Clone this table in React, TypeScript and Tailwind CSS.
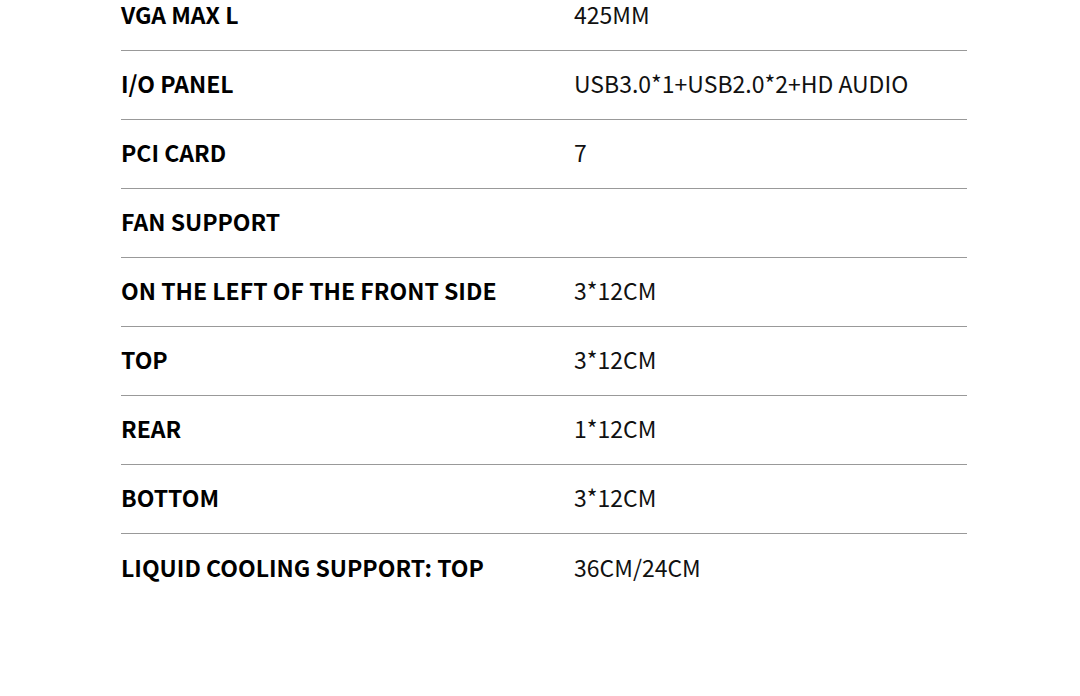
import React from 'react';

interface SpecRow {
  label: string;
  value: string;
}

const specs: SpecRow[] = [
  { label: "VGA MAX L", value: "425MM" },
  { label: "I/O PANEL", value: "USB3.0*1+USB2.0*2+HD AUDIO" },
  { label: "PCI CARD", value: "7" },
  { label: "FAN SUPPORT", value: "" },
  { label: "ON THE LEFT OF THE FRONT SIDE", value: "3*12CM" },
  { label: "TOP", value: "3*12CM" },
  { label: "REAR", value: "1*12CM" },
  { label: "BOTTOM", value: "3*12CM" },
  { label: "LIQUID COOLING SUPPORT: TOP", value: "36CM/24CM" },
];

const App = () => {
  return (
    <div
      className="min-h-screen bg-white overflow-hidden"
      style={{ fontFamily: '"Noto Sans CJK SC", "Noto Sans", sans-serif' }}
    >
      <div className="ml-[121px] w-[846px] -mt-[18px]">
        {specs.map((row, i) => (
          <div
            key={row.label}
            className={`flex items-center h-[69px] pb-[3px] ${i < specs.length - 1 ? 'border-b border-[#999999]' : ''}`}
          >
            <div className="w-[453px] text-[23px] font-bold text-black">{row.label}</div>
            <div className="flex-1 text-[23px] text-[#111]">{row.value}</div>
          </div>
        ))}
      </div>
    </div>
  );
};

export default App;
